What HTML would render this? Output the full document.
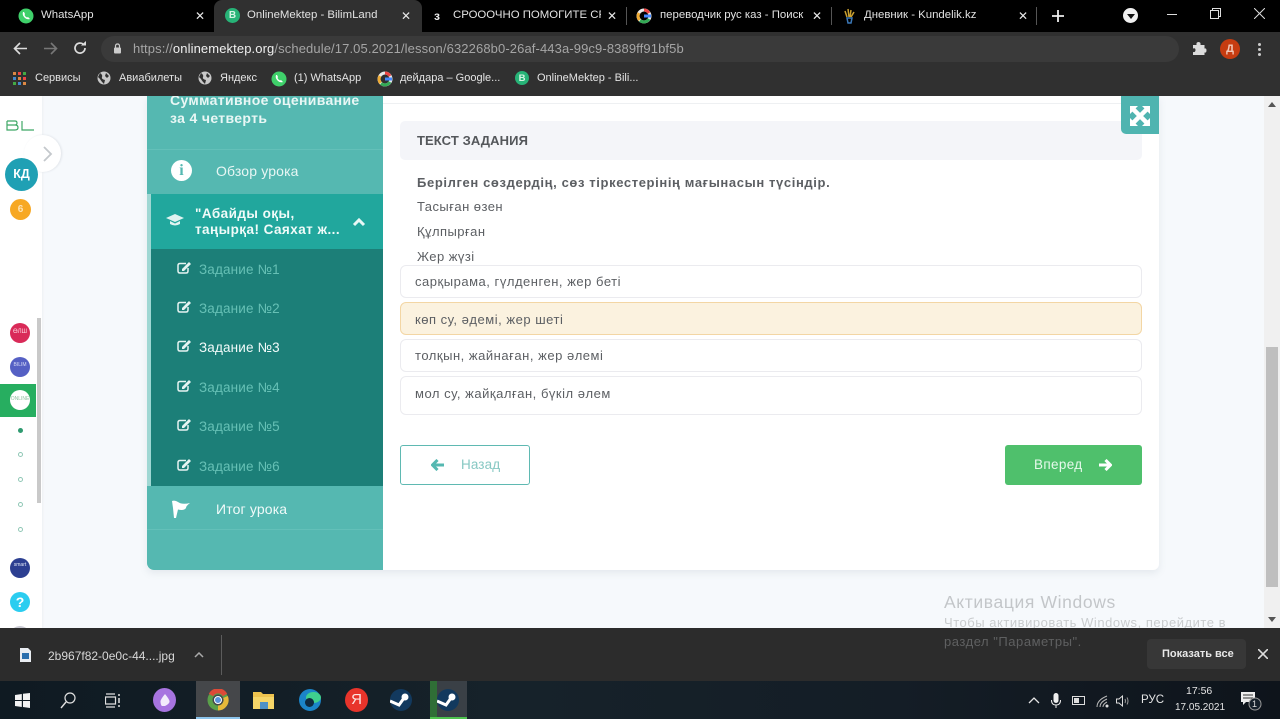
<!DOCTYPE html>
<html><head><meta charset="utf-8">
<style>
html,body{margin:0;padding:0;width:1280px;height:719px;overflow:hidden;background:#f6f9fc;font-family:"Liberation Sans","DejaVu Sans",sans-serif}
div,span,svg{position:absolute}
.t{white-space:nowrap;line-height:1}
.b{font-size:11px;color:#e4e4e4;top:73px}
.tab{font-size:11.4px;color:#e2e2e2;top:10px}
.x{color:#e8e8e8;font-size:12px;top:10px;font-weight:bold}
.c{border-radius:50%}
.task{left:199px;font-size:13.5px;color:#66c0b5;letter-spacing:.15px}
.ans{left:400px;width:740px;background:#fff;border:1px solid #ebebef;border-radius:6px;box-sizing:content-box}
.at{left:415px;font-size:13px;color:#5c5f63;letter-spacing:.52px}
.q{left:417px;font-size:13px;color:#5c5f63;letter-spacing:.45px}
.dot{left:17.5px;width:3px;height:3px;border:1px solid #8fc7b5;border-radius:50%}
</style></head><body>

<!-- page -->
<div style="left:0;top:96px;width:1280px;height:532px;background:#f6f9fc"></div>
<div style="left:0;top:96px;width:42px;height:532px;background:#fff;box-shadow:1px 0 2px #eef0f3"></div>
<div style="left:37px;top:318px;width:4px;height:185px;background:#c9c9c9"></div>
<svg width="29" height="13" style="left:6px;top:119px"><path d="M1 2H9Q11 2 11 4T9 6H1M9 6Q12 6 12 8.5T9 11H1V2M16 2V11H28" fill="none" stroke="#3fa866" stroke-width="1.2"/></svg>
<div class="c" style="left:24px;top:135px;width:37px;height:37px;background:#fff;box-shadow:1px 0 2px #dfe3e8"></div>
<svg width="12" height="18" style="left:42px;top:145px"><path d="M2 2L9 9L2 16" fill="none" stroke="#c4c8cc" stroke-width="1.8"/></svg>
<div class="c" style="left:5px;top:158px;width:33px;height:33px;background:#1fa0b4"></div>
<div class="t" style="left:5px;top:168px;width:33px;text-align:center;font-size:12.5px;font-weight:bold;color:#fff">КД</div>
<div class="c" style="left:10px;top:199px;width:21px;height:21px;background:#f7a823"></div>
<div class="t" style="left:10px;top:205px;width:21px;text-align:center;font-size:10px;font-weight:bold;color:#fde3b5">6</div>
<div class="c" style="left:10px;top:323px;width:20px;height:20px;background:#d92a58"></div>
<div class="t" style="left:10px;top:329px;width:20px;text-align:center;font-size:6px;color:#ffd5e0">ӨЛШ</div>
<div class="c" style="left:10px;top:357px;width:20px;height:20px;background:#5560c4"></div>
<div class="t" style="left:10px;top:363px;width:20px;text-align:center;font-size:5px;color:#d7dbf5">BILIM</div>
<div style="left:0;top:384px;width:36px;height:33px;background:#27ae60"></div>
<div class="c" style="left:10px;top:390px;width:20px;height:20px;background:#fff"></div>
<div class="t" style="left:10px;top:397px;width:20px;text-align:center;font-size:5px;color:#8fbf9f">ONLINE</div>
<div class="c" style="left:17.5px;top:427.5px;width:5px;height:5px;background:#2f9a70"></div>
<div class="dot" style="top:452px"></div>
<div class="dot" style="top:477px"></div>
<div class="dot" style="top:502px"></div>
<div class="dot" style="top:527px"></div>
<div class="c" style="left:10px;top:558px;width:20px;height:20px;background:#2c3f91"></div>
<div class="t" style="left:10px;top:563px;width:20px;text-align:center;font-size:5px;line-height:5px;color:#dfe6f5">smart</div>
<div class="c" style="left:10px;top:592px;width:20px;height:20px;background:#2bcdf0"></div>
<div class="t" style="left:10px;top:595px;width:20px;text-align:center;font-size:14px;font-weight:bold;color:#fff">?</div>
<div class="c" style="left:10px;top:626px;width:20px;height:20px;background:#c9c9d2"></div>

<!-- lesson card -->
<div style="left:147px;top:96px;width:1012px;height:474px;background:#fff;border-radius:0 0 6px 6px;box-shadow:0 3px 8px rgba(120,135,150,.14)"></div>
<div style="left:147px;top:96px;width:236px;height:474px;background:#55b8b1;border-radius:0 0 0 7px"></div>
<div style="left:147px;top:149px;width:236px;height:1px;background:#63c0b9"></div>
<div style="left:147px;top:529px;width:236px;height:1px;background:#63c0b9"></div>
<div class="t" style="left:170px;top:91px;font-size:14px;font-weight:bold;color:#e9f7f5;letter-spacing:.35px;line-height:18px">Суммативное оценивание<br>за 4 четверть</div>
<div class="c" style="left:171px;top:160px;width:21px;height:21px;background:#fff"></div>
<div class="t" style="left:171px;top:162px;width:21px;text-align:center;font:bold 16px 'Liberation Serif',serif;color:#55b8b1">i</div>
<div class="t" style="left:216px;top:164px;font-size:14px;color:#e8f6f4;letter-spacing:.15px">Обзор урока</div>
<div style="left:147px;top:194px;width:4px;height:292px;background:#9fd7d3"></div>
<div style="left:151px;top:194px;width:232px;height:55px;background:#21a79d"></div>
<div style="left:151px;top:249px;width:232px;height:237px;background:#1c7f78"></div>
<svg width="18" height="14" style="left:166px;top:213px"><path d="M9 1L18 5L9 9L0 5Z" fill="#dff3f0"/><path d="M4 8V11Q9 14 14 11V8L9 10.5Z" fill="#dff3f0"/></svg>
<div class="t" style="left:195px;top:206px;font-size:13.5px;font-weight:bold;color:#f0fbf9;letter-spacing:.45px;line-height:16px">"Абайды оқы,<br>таңырқа! Саяхат ж...</div>
<svg width="14" height="10" style="left:352px;top:217px"><path d="M2 8L7 3L12 8" fill="none" stroke="#e8f7f5" stroke-width="3"/></svg>

<svg width="15" height="13" style="left:177px;top:261px"><g fill="none" stroke="#e6f4f2" stroke-width="1.5"><path d="M9 2.5H3Q1 2.500 1 4.500V10Q1 12 3 12H9Q11 12 11 10V7"/></g><path d="M5 8L12 1L14 3L7 10H5Z" fill="#e6f4f2"/></svg>
<div class="t task" style="top:263px">Задание №1</div>
<svg width="15" height="13" style="left:177px;top:300px"><g fill="none" stroke="#e6f4f2" stroke-width="1.5"><path d="M9 2.5H3Q1 2.500 1 4.500V10Q1 12 3 12H9Q11 12 11 10V7"/></g><path d="M5 8L12 1L14 3L7 10H5Z" fill="#e6f4f2"/></svg>
<div class="t task" style="top:302px">Задание №2</div>
<svg width="15" height="13" style="left:177px;top:339px"><g fill="none" stroke="#e6f4f2" stroke-width="1.5"><path d="M9 2.5H3Q1 2.500 1 4.500V10Q1 12 3 12H9Q11 12 11 10V7"/></g><path d="M5 8L12 1L14 3L7 10H5Z" fill="#e6f4f2"/></svg>
<div class="t task" style="top:341px;color:#f2fbfa">Задание №3</div>
<svg width="15" height="13" style="left:177px;top:379px"><g fill="none" stroke="#e6f4f2" stroke-width="1.5"><path d="M9 2.5H3Q1 2.500 1 4.500V10Q1 12 3 12H9Q11 12 11 10V7"/></g><path d="M5 8L12 1L14 3L7 10H5Z" fill="#e6f4f2"/></svg>
<div class="t task" style="top:381px">Задание №4</div>
<svg width="15" height="13" style="left:177px;top:418px"><g fill="none" stroke="#e6f4f2" stroke-width="1.5"><path d="M9 2.5H3Q1 2.500 1 4.500V10Q1 12 3 12H9Q11 12 11 10V7"/></g><path d="M5 8L12 1L14 3L7 10H5Z" fill="#e6f4f2"/></svg>
<div class="t task" style="top:420px">Задание №5</div>
<svg width="15" height="13" style="left:177px;top:458px"><g fill="none" stroke="#e6f4f2" stroke-width="1.5"><path d="M9 2.5H3Q1 2.500 1 4.500V10Q1 12 3 12H9Q11 12 11 10V7"/></g><path d="M5 8L12 1L14 3L7 10H5Z" fill="#e6f4f2"/></svg>
<div class="t task" style="top:460px">Задание №6</div>

<svg width="20" height="19" style="left:171px;top:500px"><path d="M1 1Q4 0 7 2Q11 5 19 3Q15 6 15 8Q13 11 7 9.500L5 18H3L2 8Z" fill="#fff"/></svg>
<div class="t" style="left:216px;top:502px;font-size:14px;color:#f0faf9;letter-spacing:.15px">Итог урока</div>

<!-- content -->
<div style="left:383px;top:103px;width:776px;height:1px;background:#eef0f2"></div>
<div style="left:400px;top:121px;width:742px;height:39px;background:#f4f5f9;border-radius:5px"></div>
<div class="t" style="left:417px;top:134px;font-size:13px;font-weight:bold;color:#54575b;letter-spacing:.1px">ТЕКСТ ЗАДАНИЯ</div>
<div class="t q" style="top:176px;font-weight:bold;letter-spacing:.62px">Берілген сөздердің, сөз тіркестерінің мағынасын түсіндір.</div>
<div class="t q" style="top:200px">Тасыған өзен</div>
<div class="t q" style="top:225px">Құлпырған</div>
<div class="t q" style="top:250px">Жер жүзі</div>
<div class="ans" style="top:265px;height:31px"></div>
<div class="t at" style="top:275px">сарқырама, гүлденген, жер беті</div>
<div class="ans" style="top:302px;height:31px;background:#fbf2df;border-color:#f3d6a4"></div>
<div class="t at" style="top:313px">көп су, әдемі, жер шеті</div>
<div class="ans" style="top:339px;height:31px"></div>
<div class="t at" style="top:349px">толқын, жайнаған, жер әлемі</div>
<div class="ans" style="top:376px;height:37px"></div>
<div class="t at" style="top:387px">мол су, жайқалған, бүкіл әлем</div>

<div style="left:400px;top:445px;width:128px;height:38px;border:1px solid #5fb9b2;border-radius:3px;background:#fff"></div>
<svg width="14" height="12" style="left:431px;top:459px"><path d="M6.5 1L1.5 6L6.5 11M2 6H13" fill="none" stroke="#55b8b1" stroke-width="3"/></svg>
<div class="t" style="left:461px;top:458px;font-size:13.5px;color:#87c8c3;letter-spacing:.1px">Назад</div>
<div style="left:1005px;top:445px;width:137px;height:40px;background:#4fc06c;border-radius:3px"></div>
<div class="t" style="left:1034px;top:458px;font-size:13.5px;color:#e6f9eb;letter-spacing:.35px">Вперед</div>
<svg width="14" height="12" style="left:1098px;top:459px"><path d="M7.5 1L12.5 6L7.5 11M12 6H1" fill="none" stroke="#fff" stroke-width="3"/></svg>

<div style="left:1121px;top:96px;width:38px;height:38px;background:#4fb4b0;border-radius:0 0 0 5px"></div>
<svg width="20" height="20" style="left:1130px;top:106px"><path d="M3 3L17 17M17 3L3 17" stroke="#fff" stroke-width="4.5"/><g fill="#fff"><path d="M0 0H8L0 8Z"/><path d="M20 0H12L20 8Z"/><path d="M0 20H8L0 12Z"/><path d="M20 20H12L20 12Z"/></g></svg>

<div class="t" style="left:944px;top:594px;font-size:17.5px;color:#c3c6c9;letter-spacing:.62px">Активация Windows</div>
<div class="t" style="left:944px;top:616px;font-size:13px;color:#c9ccce;letter-spacing:.53px">Чтобы активировать Windows, перейдите в</div>

<!-- scrollbar -->
<div style="left:1264px;top:96px;width:16px;height:532px;background:#f0f0f0"></div>
<div style="left:1266px;top:347px;width:12px;height:240px;background:#bfbfbf"></div>
<svg width="8" height="5" style="left:1268px;top:102px"><path d="M0 5L4 0L8 5Z" fill="#555"/></svg>
<svg width="8" height="5" style="left:1268px;top:617px"><path d="M0 0L4 5L8 0Z" fill="#555"/></svg>

<!-- tabs -->
<div style="left:0;top:0;width:1280px;height:32px;background:#000"></div>
<div style="left:214px;top:0;width:208px;height:32px;background:#303030;border-radius:8px 8px 0 0"></div>
<svg width="16" height="16" style="left:18px;top:8px"><circle cx="8" cy="8" r="7.5" fill="#3fd06a"/><path d="M5 4Q4 7 6.5 9.500T12 11L10 9L9 9.500Q7 8.500 6.500 7L7 6L6 4Z" fill="#fff"/></svg>
<div class="t tab" style="left:41px">WhatsApp</div>
<div class="t x" style="left:195px">✕</div>
<div class="c" style="left:225px;top:8px;width:15px;height:15px;background:#27b377"></div>
<div class="t" style="left:225px;top:11px;width:15px;text-align:center;font-size:10px;font-weight:bold;color:#d5f4e3">B</div>
<div class="t tab" style="left:247px">OnlineMektep - BilimLand</div>
<div class="t x" style="left:401px">✕</div>
<div class="t" style="left:434px;top:10px;font-size:12px;font-weight:bold;color:#eee">з</div>
<div class="t tab" style="left:453px;width:148px;overflow:hidden">СРОООЧНО ПОМОГИТЕ СРОЧНО</div>
<div class="t x" style="left:607px">✕</div>
<div style="left:626px;top:7px;width:1px;height:18px;background:#555"></div>
<svg width="16" height="16" style="left:636px;top:8px"><circle cx="8" cy="8" r="6" fill="none" stroke="#e8e8e8" stroke-width="3"/><path d="M8 2A6 6 0 0 1 13 5" fill="none" stroke="#e44" stroke-width="3"/><path d="M3 5A6 6 0 0 0 3.5 12" fill="none" stroke="#ea3" stroke-width="3"/><path d="M4 12.5A6 6 0 0 0 13 11" fill="none" stroke="#3a5" stroke-width="3"/><path d="M8 8H15" stroke="#48f" stroke-width="3"/></svg>
<div class="t tab" style="left:660px;width:145px;overflow:hidden">переводчик рус каз - Поиск</div>
<div class="t x" style="left:812px">✕</div>
<div style="left:831px;top:7px;width:1px;height:18px;background:#555"></div>
<svg width="14" height="16" style="left:842px;top:8px"><path d="M3 3L5 9M6 1L7 9M9 2L8 9M12 4L9 9" stroke="#c9a030" stroke-width="1.5"/><path d="M5 10H10L9 15H6Z" fill="none" stroke="#3b78b8" stroke-width="1.5"/></svg>
<div class="t tab" style="left:864px">Дневник - Kundelik.kz</div>
<div class="t x" style="left:1018px">✕</div>
<div style="left:1036px;top:7px;width:1px;height:18px;background:#555"></div>
<svg width="12" height="12" style="left:1052px;top:10px"><path d="M6 0V12M0 6H12" stroke="#eee" stroke-width="1.8"/></svg>
<div class="c" style="left:1123px;top:8px;width:15px;height:15px;background:#f0f0f0"></div>
<svg width="8" height="5" style="left:1127px;top:13.5px"><path d="M0 0H8L4 5Z" fill="#111"/></svg>
<div style="left:1167px;top:14px;width:10px;height:1px;background:#ddd"></div>
<svg width="11" height="11" style="left:1210px;top:8px"><path d="M.5 2.5H8.5V10.5H.5ZM2.5 2.5V.5H10.5V8.5H8.5" fill="none" stroke="#ddd"/></svg>
<svg width="11" height="11" style="left:1254px;top:8px"><path d="M0 0L11 11M11 0L0 11" stroke="#ddd" stroke-width="1"/></svg>

<!-- toolbar -->
<div style="left:0;top:32px;width:1280px;height:64px;background:#303030"></div>
<div style="left:101px;top:36px;width:1078px;height:26px;border-radius:13px;background:#3a3a3a"></div>
<svg width="15" height="13" style="left:13px;top:42px"><path d="M7 1L1.5 6.5L7 12M2 6.5H14" fill="none" stroke="#ddd" stroke-width="1.6"/></svg>
<svg width="15" height="13" style="left:43px;top:42px"><path d="M8 1L13.5 6.5L8 12M13 6.5H1" fill="none" stroke="#777" stroke-width="1.6"/></svg>
<svg width="14" height="14" style="left:73px;top:41px"><path d="M12 7A5 5 0 1 1 10.5 3.5" fill="none" stroke="#ddd" stroke-width="1.7"/><path d="M8 4.5H13V0Z" fill="#ddd"/></svg>
<svg width="9" height="11" style="left:113px;top:43px"><path d="M2.5 5V3Q2.500 1 4.500 1T6.500 3V5" fill="none" stroke="#ccc" stroke-width="1.2"/><rect x="1" y="4.5" width="7" height="6" rx="1" fill="#ccc"/></svg>
<div class="t" style="left:133px;top:42px;font-size:13px;color:#a5a5a5;letter-spacing:.11px">https://<span style="position:static;color:#f0f0f0">onlinemektep.org</span>/schedule/17.05.2021/lesson/632268b0-26af-443a-99c9-8389ff91bf5b</div>
<svg width="15" height="15" style="left:1192px;top:41px"><path d="M1 4H4.5Q4 1 6.500 1T8.500 4H12.500V7.500Q14.500 7 14.500 9.500T12.500 11.500V14H1V11Q3.500 11.500 3.500 9T1 7.500Z" fill="#dcdcdc"/></svg>
<div class="c" style="left:1220px;top:39px;width:20px;height:20px;background:#c63c11"></div>
<div class="t" style="left:1220px;top:44px;width:20px;text-align:center;font-size:11px;font-weight:bold;color:#f1c7b7">Д</div>
<div class="c" style="left:1258px;top:43px;width:3px;height:3px;background:#ccc"></div>
<div class="c" style="left:1258px;top:48px;width:3px;height:3px;background:#ccc"></div>
<div class="c" style="left:1258px;top:53px;width:3px;height:3px;background:#ccc"></div>

<!-- bookmarks -->
<svg width="13" height="13" style="left:13px;top:72px"><g fill="#d84"><rect width="3" height="3"/><rect x="5" width="3" height="3" fill="#e44"/><rect x="10" width="3" height="3" fill="#4a4"/><rect y="5" width="3" height="3" fill="#48c"/><rect x="5" y="5" width="3" height="3"/><rect x="10" y="5" width="3" height="3" fill="#e44"/><rect y="10" width="3" height="3" fill="#4a4"/><rect x="5" y="10" width="3" height="3" fill="#48c"/><rect x="10" y="10" width="3" height="3"/></g></svg>
<div class="t b" style="left:35px">Сервисы</div>
<svg width="14" height="14" style="left:97px;top:71px"><circle cx="7" cy="7" r="6.5" fill="#c8c8c8"/><path d="M3 2Q6 4 5 6T8 9L7 13Q4 10 3 8L1 6ZM9 2L12 5L10 7L8 5Z" fill="#303030"/></svg>
<div class="t b" style="left:119px">Авиабилеты</div>
<svg width="14" height="14" style="left:198px;top:71px"><circle cx="7" cy="7" r="6.5" fill="#c8c8c8"/><path d="M3 2Q6 4 5 6T8 9L7 13Q4 10 3 8L1 6ZM9 2L12 5L10 7L8 5Z" fill="#303030"/></svg>
<div class="t b" style="left:220px">Яндекс</div>
<svg width="16" height="16" style="left:271px;top:71px"><circle cx="8" cy="8" r="7.5" fill="#3fd06a"/><path d="M5 4Q4 7 6.5 9.500T12 11L10 9L9 9.500Q7 8.500 6.500 7L7 6L6 4Z" fill="#fff"/></svg>
<div class="t b" style="left:294px">(1) WhatsApp</div>
<svg width="16" height="16" style="left:377px;top:71px"><circle cx="8" cy="8" r="6" fill="none" stroke="#e8e8e8" stroke-width="3"/><path d="M8 2A6 6 0 0 1 13 5" fill="none" stroke="#e44" stroke-width="3"/><path d="M3 5A6 6 0 0 0 3.5 12" fill="none" stroke="#ea3" stroke-width="3"/><path d="M4 12.5A6 6 0 0 0 13 11" fill="none" stroke="#3a5" stroke-width="3"/><path d="M8 8H15" stroke="#48f" stroke-width="3"/></svg>
<div class="t b" style="left:400px">дейдара – Google...</div>
<div class="c" style="left:515px;top:71px;width:14px;height:14px;background:#27b377"></div>
<div class="t" style="left:515px;top:73.5px;width:14px;text-align:center;font-size:9.5px;font-weight:bold;color:#d5f4e3">B</div>
<div class="t b" style="left:537px">OnlineMektep - Bili...</div>

<!-- download bar -->
<div style="left:0;top:628px;width:1280px;height:53px;background:#2c2c2c"></div>
<svg width="11" height="14" style="left:20px;top:648px"><path d="M0 0H8L11 3V14H0Z" fill="#e9edf2"/><rect x="2" y="5" width="7" height="6" fill="#2a6fae"/></svg>
<div class="t" style="left:48px;top:650px;font-size:12px;color:#d8d8d8">2b967f82-0e0c-44....jpg</div>
<svg width="10" height="6" style="left:194px;top:652px"><path d="M1 5L5 1L9 5" fill="none" stroke="#aaa" stroke-width="1.5"/></svg>
<div style="left:221px;top:635px;width:1px;height:40px;background:#5c5c5c"></div>
<div class="t" style="left:944px;top:635px;font-size:13px;color:#5f6061;letter-spacing:.53px">раздел "Параметры".</div>
<div style="left:1147px;top:639px;width:99px;height:30px;background:#373737;border-radius:4px"></div>
<div class="t" style="left:1162px;top:649px;font-size:11px;font-weight:bold;color:#e8e8e8">Показать все</div>
<svg width="10" height="10" style="left:1258px;top:649px"><path d="M0 0L10 10M10 0L0 10" stroke="#ddd" stroke-width="1.6"/></svg>

<!-- taskbar -->
<div style="left:0;top:681px;width:1280px;height:38px;background:linear-gradient(90deg,#0f1a22,#16222a 40%,#141d26 70%,#0e141b)"></div>
<svg width="15" height="15" style="left:15px;top:693px"><path d="M0 2L6.8 1V7H0ZM8 .8L15 0V7H8ZM0 8H6.8V14L0 13ZM8 8H15V15L8 14Z" fill="#f3f3f3"/></svg>
<svg width="16" height="17" style="left:60px;top:692px"><circle cx="10" cy="6" r="5" fill="none" stroke="#e0e0e0" stroke-width="1.2"/><path d="M6 10L1 16" stroke="#e0e0e0" stroke-width="1.4"/></svg>
<svg width="16" height="15" style="left:105px;top:693px"><path d="M.5 4H10.5V11H.5ZM1 1H10M1 14H10" fill="none" stroke="#e0e0e0" stroke-width="1.2"/><path d="M14 1V3M14 5V10M14 12V14" stroke="#e0e0e0" stroke-width="1.5"/></svg>
<div class="c" style="left:153px;top:688px;width:23px;height:24px;background:#a774e0"></div>
<svg width="10" height="12" style="left:160px;top:694px"><path d="M5 0Q10 6 9.5 8T5 12T.5 8Q0 6 5 0Z" fill="#f2ecfb"/></svg>
<div style="left:196px;top:681px;width:44px;height:38px;background:#45474a"></div>
<div style="left:196px;top:717px;width:44px;height:2px;background:#8cc4ec"></div>
<svg width="22" height="22" style="left:207px;top:689px"><circle cx="11" cy="11" r="8" fill="none" stroke="#5aa04a" stroke-width="5"/><path d="M4 6A8 8 0 0 1 18 6" fill="none" stroke="#dd4a38" stroke-width="5"/><path d="M18.5 8A8 8 0 0 1 11 19" fill="none" stroke="#e8b93a" stroke-width="5"/><circle cx="11" cy="11" r="3.5" fill="#5a93dc" stroke="#fff"/></svg>
<svg width="22" height="20" style="left:253px;top:690px"><path d="M0 2H8L10 4H21V19H0Z" fill="#eec34e"/><rect x="0" y="7" width="21" height="12" fill="#f6d668"/><rect x="7" y="12" width="8" height="7" fill="#4e91c7"/></svg>
<div class="c" style="left:299px;top:689px;width:22px;height:22px;background:#1b84c8"></div>
<div class="c" style="left:306px;top:692px;width:15px;height:11px;background:#3fcf8e"></div>
<div class="c" style="left:305px;top:698px;width:9px;height:9px;background:#0f2a40"></div>
<div class="c" style="left:345px;top:688px;width:23px;height:24px;background:#e8342b"></div>
<div class="t" style="left:345px;top:692px;width:23px;text-align:center;font-size:15px;color:#fde4e2">Я</div>
<div class="c" style="left:390px;top:689px;width:22px;height:22px;background:#12395e"></div>
<svg width="22" height="22" style="left:390px;top:689px"><path d="M0 12L9 16L14 9" stroke="#fff" stroke-width="3" fill="none"/><circle cx="15" cy="8" r="3.5" fill="#fff"/></svg>
<div style="left:430px;top:681px;width:37px;height:38px;background:#3a4046"></div>
<div style="left:430px;top:681px;width:7px;height:38px;background:#2f6e36"></div>
<div style="left:430px;top:717px;width:37px;height:2px;background:#4ec24e"></div>
<div class="c" style="left:437px;top:689px;width:22px;height:22px;background:#12395e"></div>
<svg width="22" height="22" style="left:437px;top:689px"><path d="M0 12L9 16L14 9" stroke="#fff" stroke-width="3" fill="none"/><circle cx="15" cy="8" r="3.5" fill="#fff"/></svg>

<svg width="12" height="7" style="left:1028px;top:697px"><path d="M1 6L6 1L11 6" fill="none" stroke="#e4e4e4" stroke-width="1.3"/></svg>
<svg width="10" height="15" style="left:1051px;top:693px"><rect x="2.5" y="0" width="5" height="10" rx="2.5" fill="#eee"/><path d="M.5 7Q.5 12 5 12T9.5 7M5 12V15" fill="none" stroke="#eee"/></svg>
<svg width="14" height="9" style="left:1072px;top:696px"><rect x=".5" y=".5" width="12" height="8" fill="none" stroke="#ddd"/><rect x="2" y="2" width="5" height="5" fill="#ddd"/></svg>
<svg width="13" height="13" style="left:1096px;top:695px"><path d="M1 12Q1 5 11 1M4 12Q4 7 11 4M7 12Q7 9 11 7" fill="none" stroke="#bbb"/><circle cx="11" cy="11" r="1.5" fill="#ddd"/></svg>
<svg width="15" height="12" style="left:1116px;top:695px"><path d="M.5 4H3L6.5 1V11L3 8H.5Z" fill="none" stroke="#ddd"/><path d="M9 4Q10 6 9 8M11 2.5Q13 6 11 9.500" fill="none" stroke="#999"/></svg>
<div class="t" style="left:1141px;top:695px;font-size:11.5px;color:#e4e4e4">РУС</div>
<div class="t" style="left:1186px;top:686px;font-size:10.5px;color:#e4e4e4">17:56</div>
<div class="t" style="left:1175px;top:703px;font-size:10px;color:#e4e4e4">17.05.2021</div>
<svg width="22" height="20" style="left:1240px;top:691px"><path d="M1 1H15V11H6L3 14V11H1Z" fill="#eee"/><path d="M3 4H13M3 7H13" stroke="#333"/><circle cx="15" cy="13" r="6" fill="#16202a" stroke="#999"/></svg>
<div class="t" style="left:1252px;top:700px;font-size:9px;color:#ddd">1</div>
</body></html>
